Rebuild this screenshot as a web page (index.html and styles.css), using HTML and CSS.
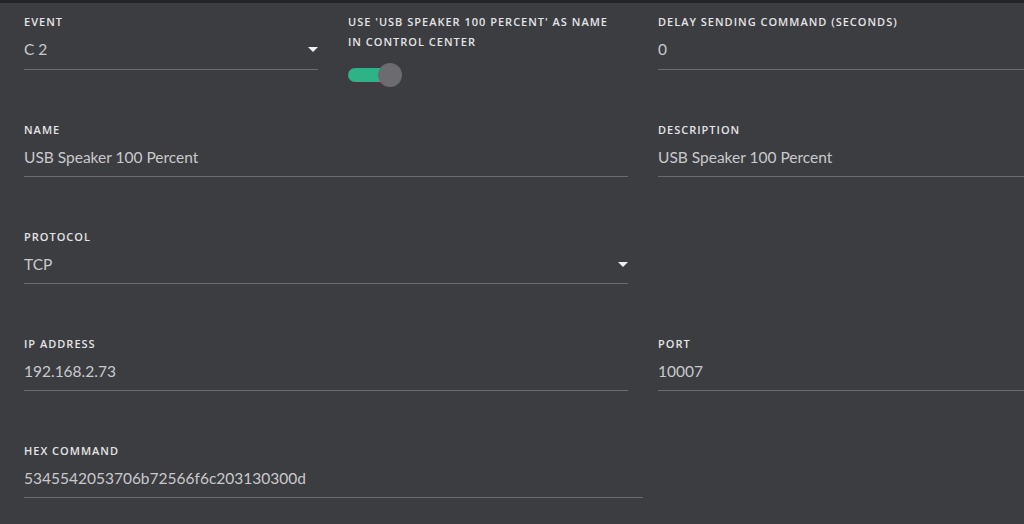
FILE: index.html
```html
<!DOCTYPE html>
<html lang="en">
<head>
    <meta charset="UTF-8">
    <meta name="viewport" content="width=device-width, initial-scale=1.0">
    <title>Edit Command</title>
    <link rel="stylesheet" href="styles.css">
</head>
<body>

    <div class="panel">
        <div class="form">

            <!-- Row 1 -->
            <div class="row first">
                <div class="left split">
                    <div class="field select">
                        <label>Event</label>
                        <div class="value">C 2 <span class="caret"></span></div>
                    </div>
                    <div class="switch-field">
                        <label>Use 'USB Speaker 100 Percent' as name in control center</label>
                        <div class="switch on"><span class="knob"></span></div>
                    </div>
                </div>
                <div class="right">
                    <div class="field">
                        <label>Delay sending command (seconds)</label>
                        <div class="value">0</div>
                    </div>
                </div>
            </div>

            <!-- Row 2 -->
            <div class="row">
                <div class="left">
                    <div class="field">
                        <label>Name</label>
                        <div class="value">USB Speaker 100 Percent</div>
                    </div>
                </div>
                <div class="right">
                    <div class="field">
                        <label>Description</label>
                        <div class="value">USB Speaker 100 Percent</div>
                    </div>
                </div>
            </div>

            <!-- Row 3 -->
            <div class="row">
                <div class="left">
                    <div class="field select">
                        <label>Protocol</label>
                        <div class="value">TCP <span class="caret"></span></div>
                    </div>
                </div>
            </div>

            <!-- Row 4 -->
            <div class="row">
                <div class="left">
                    <div class="field">
                        <label>IP Address</label>
                        <div class="value">192.168.2.73</div>
                    </div>
                </div>
                <div class="right">
                    <div class="field">
                        <label>Port</label>
                        <div class="value">10007</div>
                    </div>
                </div>
            </div>

            <!-- Row 5 -->
            <div class="row">
                <div class="wide">
                    <div class="field">
                        <label>Hex Command</label>
                        <div class="value">5345542053706b72566f6c203130300d</div>
                    </div>
                </div>
            </div>

        </div>
    </div>

</body>
</html>
```

FILE: styles.css
```css
body {
    margin: 0;
    padding: 0;
    background-color: #3c3d41;
    font-family: Lato, "Open Sans", sans-serif;
    overflow: hidden;
}

.panel {
    border-top: 3px solid #232427;
    height: 521px;
    overflow: hidden;
}

.form {
    padding: 11px 0 0 24px;
    display: flex;
    flex-direction: column;
}

.row {
    display: flex;
    gap: 30px;
    width: 1300px;
    height: 107px;
}

.row.first {
    height: 108px;
}

.left {
    width: 604px;
}

.right {
    width: 604px;
}

.wide {
    width: 619px;
}

.split {
    display: flex;
    gap: 30px;
}

.split .field {
    width: 294px;
}

label {
    display: block;
    color: #e4e4e6;
    font-family: "Open Sans", sans-serif;
    font-size: 11px;
    font-weight: 600;
    letter-spacing: 1px;
    text-transform: uppercase;
    line-height: 16px;
}

.field .value {
    margin-top: 8px;
    padding-bottom: 8px;
    border-bottom: 1px solid #6a6b6f;
    color: #c9c9cc;
    font-size: 15.5px;
    line-height: 22px;
    position: relative;
}

.first .field .value {
    padding-bottom: 9px;
}

.caret {
    position: absolute;
    right: 0;
    top: 9px;
    width: 0;
    height: 0;
    border-left: 5px solid transparent;
    border-right: 5px solid transparent;
    border-top: 5px solid #f0f0f0;
}

.switch-field {
    width: 270px;
}

.switch-field label {
    line-height: 20px;
    margin-top: -2px;
}

.switch {
    margin-top: 11px;
    width: 54px;
    height: 24px;
    position: relative;
}

.switch::before {
    content: "";
    position: absolute;
    left: 0;
    top: 5px;
    width: 44px;
    height: 14px;
    border-radius: 7px;
    background-color: #2db386;
}

.knob {
    position: absolute;
    left: 30px;
    top: 0;
    width: 24px;
    height: 24px;
    border-radius: 50%;
    background-color: #6c6c70;
}
```
